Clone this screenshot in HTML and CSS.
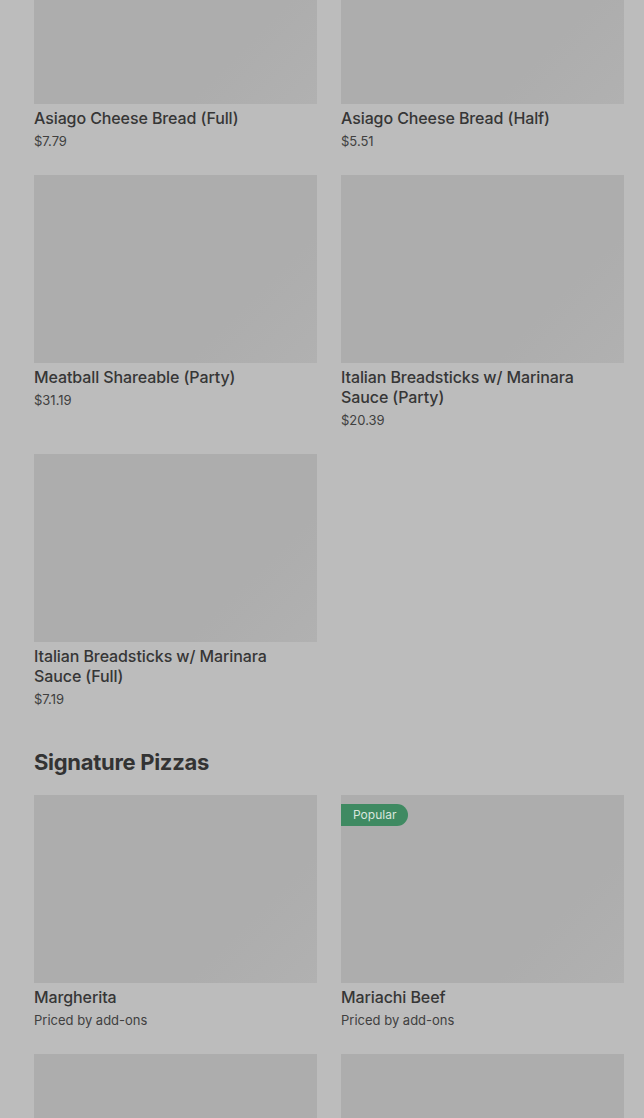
FILE: index.html
```html
<!DOCTYPE html>
<html>
<head>
<meta charset="utf-8">
<link rel="stylesheet" href="styles.css">
</head>
<body>
<div class="page">
  <div class="grid first">
    <div class="card">
      <div class="thumb"></div>
      <div class="title">Asiago Cheese Bread (Full)</div>
      <div class="price">$7.79</div>
    </div>
    <div class="card">
      <div class="thumb"></div>
      <div class="title">Asiago Cheese Bread (Half)</div>
      <div class="price">$5.51</div>
    </div>
    <div class="card">
      <div class="thumb"></div>
      <div class="title">Meatball Shareable (Party)</div>
      <div class="price">$31.19</div>
    </div>
    <div class="card">
      <div class="thumb"></div>
      <div class="title">Italian Breadsticks w/ Marinara Sauce (Party)</div>
      <div class="price">$20.39</div>
    </div>
    <div class="card">
      <div class="thumb"></div>
      <div class="title">Italian Breadsticks w/ Marinara Sauce (Full)</div>
      <div class="price">$7.19</div>
    </div>
  </div>

  <h2 class="section-title">Signature Pizzas</h2>

  <div class="grid">
    <div class="card">
      <div class="thumb"></div>
      <div class="title">Margherita</div>
      <div class="price">Priced by add-ons</div>
    </div>
    <div class="card">
      <div class="thumb">
        <span class="badge">Popular</span>
      </div>
      <div class="title">Mariachi Beef</div>
      <div class="price">Priced by add-ons</div>
    </div>
    <div class="card">
      <div class="thumb"></div>
    </div>
    <div class="card">
      <div class="thumb"></div>
    </div>
  </div>
</div>
</body>
</html>
```

FILE: styles.css
```css
html, body {
  margin: 0;
  padding: 0;
  background: #bcbcbc;
  overflow: hidden;
}

body {
  font-family: "Inter", "Liberation Sans", sans-serif;
  color: #363636;
}

.page {
  padding: 0 20px 0 34px;
}

.grid {
  display: grid;
  grid-template-columns: 283px 283px;
  column-gap: 24px;
  row-gap: 24px;
  align-items: start;
}

.grid.first {
  margin-top: -84px;
}

.card {
  display: flex;
  flex-direction: column;
}

.thumb {
  position: relative;
  height: 188px;
  background: linear-gradient(135deg, #adadad 0%, #adadad 72%, #b1b1b1 100%);
}

.title {
  margin-top: 4px;
  font-size: 16px;
  line-height: 20px;
  font-weight: 500;
  letter-spacing: -0.1px;
  color: #363636;
}

.price {
  margin-top: 3px;
  font-size: 13px;
  line-height: 20px;
  font-weight: 400;
  color: #404040;
}

.section-title {
  margin: 37px 0 17px;
  font-size: 22px;
  line-height: 32px;
  font-weight: 700;
  letter-spacing: -0.3px;
  color: #333333;
}

.badge {
  position: absolute;
  top: 9px;
  left: 0;
  height: 22px;
  padding: 0 12px 0 12px;
  background: #3f8a62;
  color: #d9e6de;
  font-size: 12px;
  line-height: 22px;
  border-radius: 0 11px 11px 0;
}
```
